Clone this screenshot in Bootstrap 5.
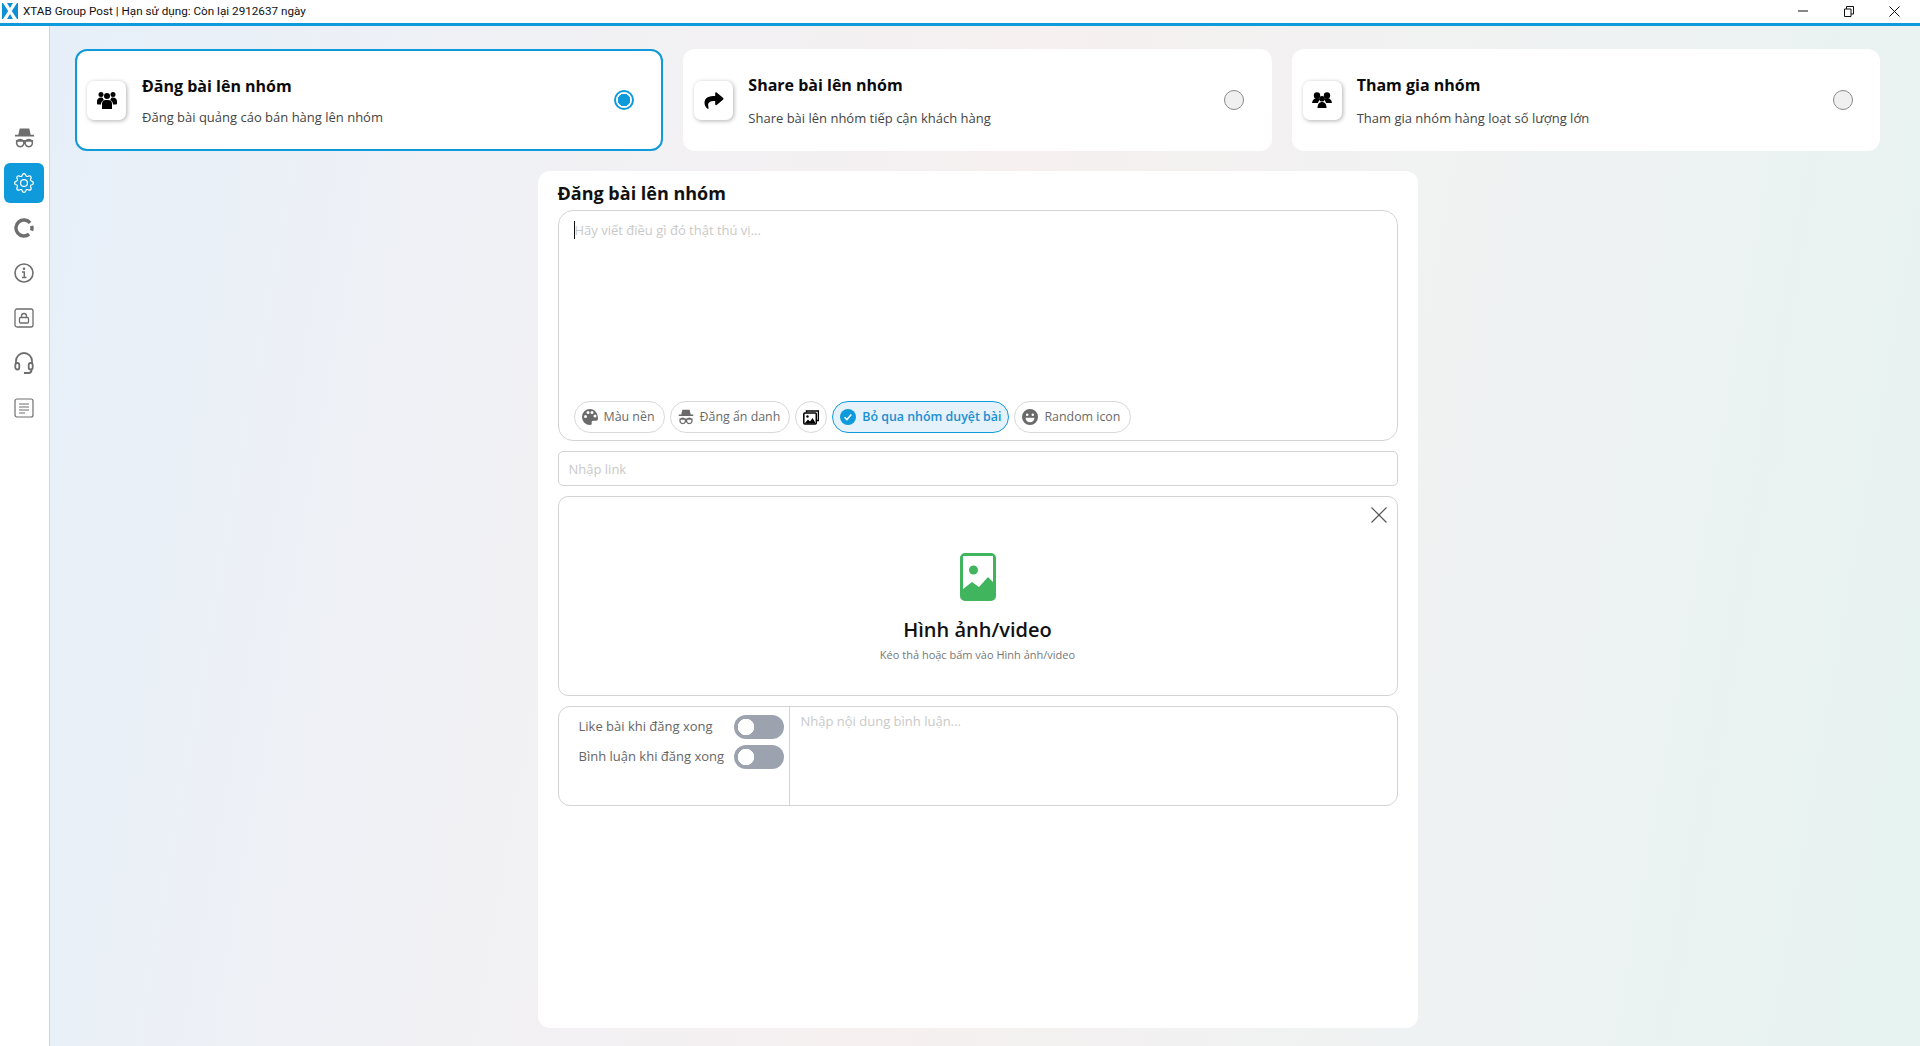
<!DOCTYPE html>
<html lang="vi">
<head>
    <meta charset="UTF-8">
    <title>XTAB Group Post</title>
    <meta name="viewport" content="width=device-width, initial-scale=1">

    <!-- Bootstrap CSS -->
    <link href="https://cdn.jsdelivr.net/npm/bootstrap@5.3.0/dist/css/bootstrap.min.css" rel="stylesheet">

    <style>
        :root {
            --xt-blue: #0f9adb;
            --xt-line: #d4d4d4;
            --xt-hold: #c9c9c9;
        }

        html, body { height: 100%; }

        body {
            font-family: "Open Sans", "Noto Sans", sans-serif;
            font-size: 13px;
            color: #333;
            overflow: hidden;
        }

        .win-bar {
            height: 26px;
            background: #fff;
            border-bottom: 3px solid var(--xt-blue);
            font-family: Roboto, "Noto Sans", sans-serif;
            font-size: 11.7px;
            color: #111;
            padding-left: 2px;
        }
        .win-title { margin-left: 5px; }
        .win-ctl { width: 45.5px; text-align: center; line-height: 0; }
        .win-ctls { margin-right: 3px; }

        .app-body {
            height: calc(100% - 26px);
            background: linear-gradient(100deg, #e5eff9 0%, #f0f1f5 25%, #f6f0f0 50%, #f0f2f2 72%, #e6f3f1 100%);
        }

        .side-rail {
            width: 50px;
            background: #fff;
            border-right: 1px solid #c9d5e4;
            padding: 92px 5px 0 4px;
            gap: 5px;
        }
        .rail-btn {
            width: 40px;
            height: 40px;
            border-radius: 6px;
            color: #6e6e6e;
        }
        .rail-btn.is-on { background: var(--xt-blue); color: #fff; }

        .work-area { padding: 23px 40px 18px 25px; min-width: 0; }

        .mode-grid {
            display: grid;
            grid-template-columns: repeat(3, 1fr);
            gap: 20px;
            height: 102px;
            margin-bottom: 20px;
        }
        .mode-tile {
            background: #fff;
            border-radius: 12px;
            padding: 0 28px 0 11px;
            border: 0;
        }
        .mode-tile.is-on { border: 2px solid var(--xt-blue); padding: 0 27px 0 10px; }
        .mode-tile.is-last { padding-right: 27px; }
        .mode-ico {
            width: 39px;
            height: 39px;
            border-radius: 7px;
            background: #fff;
            box-shadow: 1px 1px 4px rgba(0, 0, 0, .3);
            margin-right: 15px;
            flex: none;
        }
        .mode-tile.is-on .mode-ico { margin-right: 16px; }
        .mode-name { font-size: 16px; font-weight: 700; color: #0b0b0b; line-height: 22px; margin-bottom: 13px; }
        .mode-tile.is-on .mode-name { margin-bottom: 11px; }
        .mode-sub { font-size: 13px; color: #444; line-height: 18px; }

        .mode-radio.form-check-input {
            width: 20px;
            height: 20px;
            margin: 0;
            flex: none;
            background-color: #f0f0f0;
            border: 1px solid #8a8a8a;
        }
        .mode-radio.form-check-input:checked {
            background-color: #fff;
            background-image: radial-gradient(circle, var(--xt-blue) 6px, transparent 6.5px);
            border: 2px solid var(--xt-blue);
        }

        .post-panel {
            width: 880px;
            height: 857px;
            margin: 0 auto;
            background: #fff;
            border-radius: 12px;
            padding: 8px 20px 10px 20px;
        }
        .post-head { font-size: 18px; font-weight: 700; color: #111; line-height: 29px; margin-bottom: 2px; }

        .edit-box {
            height: 231px;
            border: 1px solid var(--xt-line);
            border-radius: 15px;
            padding: 9px 15px 7px 15px;
            margin-bottom: 10px;
            position: relative;
        }
        .edit-caret {
            position: absolute;
            left: 15px;
            top: 10px;
            width: 1px;
            height: 18px;
            background: #111;
        }
        .plain-input {
            border: 0;
            outline: 0;
            resize: none;
            padding: 0;
            font-size: 13px;
            line-height: 20px;
            color: #333;
            background: transparent;
            width: 100%;
        }
        .edit-box .plain-input { padding-left: 1px; }
        .plain-input::placeholder { color: var(--xt-hold); opacity: 1; }

        .tool-pill.btn {
            height: 32px;
            padding: 0 9px 0 7px;
            border: 1px solid #d9d9d9;
            border-radius: 16px;
            font-size: 12.4px;
            color: #6a6a6a;
            background: #fff;
            gap: 6px;
        }
        .tool-gap { gap: 5px; }
        .tool-pill.pill-round { width: 32px; padding: 0; justify-content: center; }
        .tool-pill.pill-on {
            padding-right: 7px;
            background: #e5f1fb;
            border-color: var(--xt-blue);
            color: #1b8fd0;
            font-weight: 600;
        }
        .tool-pill.pill-wide { padding-right: 10px; }

        .link-field.form-control {
            height: 35px;
            border: 1px solid var(--xt-line);
            border-radius: 5px;
            font-size: 13px;
            padding: 0 10px;
            margin-bottom: 10px;
        }
        .link-field.form-control::placeholder { color: var(--xt-hold); opacity: 1; }

        .drop-box {
            height: 200px;
            border: 1px solid var(--xt-line);
            border-radius: 10px;
            margin-bottom: 10px;
            position: relative;
            padding-top: 56px;
        }
        .drop-close { position: absolute; top: 10px; right: 10px; line-height: 0; }
        .drop-name { font-size: 20px; font-weight: 600; color: #111; line-height: 28px; margin-top: 15px; }
        .drop-sub { font-size: 11px; color: #777; line-height: 16px; margin-top: 3px; }

        .comment-box {
            height: 100px;
            border: 1px solid var(--xt-line);
            border-radius: 12px;
        }
        .comment-opts {
            width: 231px;
            border-right: 1px solid var(--xt-line);
            padding: 8px 5px 0 20px;
            flex: none;
        }
        .opt-row { height: 24px; margin-bottom: 6px; color: #666; font-size: 13px; }
        .opt-row .form-check-input {
            width: 50px;
            height: 24px;
            margin: 0;
            float: none;
            border: 0;
            background-color: #9ca3af;
            background-image: radial-gradient(circle at 12px 12px, #fff 8px, transparent 8.5px);
            background-position: 0 0;
            background-size: auto;
        }
        .opt-row.form-switch { padding-left: 0; min-height: 0; }
        .comment-text { padding: 4px 11px; }
    </style>
</head>
<body>

    <div class="win-bar d-flex align-items-center justify-content-between">
        <div class="d-flex align-items-center">
            <svg width="16" height="16" viewBox="0 0 16 16"><rect width="16" height="16" fill="#0f8fd6"/><path d="M1 0h4l3 5 3-5h4L9.800 8 15 16h-4L8 11l-3 5H1l5.200-8z" fill="#fff"/></svg>
            <span class="win-title">XTAB Group Post | Hạn sử dụng: Còn lại 2912637 ngày</span>
        </div>
        <div class="d-flex win-ctls">
            <span class="win-ctl"><svg width="10" height="10" viewBox="0 0 10 10"><path d="M0 5h10" stroke="#111"/></svg></span>
            <span class="win-ctl"><svg width="10" height="11" viewBox="0 0 10 11"><path d="M.5 3h6.500v7.500H.5zM2.500 3V.5h7v7.500H7" fill="none" stroke="#111"/></svg></span>
            <span class="win-ctl"><svg width="11" height="11" viewBox="0 0 11 11"><path d="M.5.5l10 10M10.500.5l-10 10" stroke="#111"/></svg></span>
        </div>
    </div>

    <div class="app-body d-flex">
        <div class="side-rail d-flex flex-column flex-shrink-0">
            <div class="rail-btn d-flex align-items-center justify-content-center">
                <svg width="21" height="22" viewBox="0 0 22 22" fill="currentColor"><path d="M6 1h10l1.500 6.500h3.500v2H1v-2h3.500z"/><path d="M2 14h18M6.500 12.500a3.800 3.800 0 1 0 .01 0zM15.500 12.500a3.800 3.800 0 1 0 .01 0z" fill="none" stroke="currentColor" stroke-width="1.600"/></svg>
            </div>
            <div class="rail-btn is-on d-flex align-items-center justify-content-center">
                <svg width="20" height="20" viewBox="0 0 16 16" fill="currentColor"><path d="M8 4.754a3.246 3.246 0 1 0 0 6.492 3.246 3.246 0 0 0 0-6.492zM5.754 8a2.246 2.246 0 1 1 4.492 0 2.246 2.246 0 0 1-4.492 0z"/><path d="M9.796 1.343c-.527-1.790-3.065-1.790-3.592 0l-.094.319a.873.873 0 0 1-1.255.52l-.292-.16c-1.640-.892-3.433.902-2.540 2.541l.159.292a.873.873 0 0 1-.52 1.255l-.319.094c-1.790.527-1.790 3.065 0 3.592l.319.094a.873.873 0 0 1 .52 1.255l-.16.292c-.892 1.640.901 3.434 2.541 2.540l.292-.159a.873.873 0 0 1 1.255.52l.094.319c.527 1.790 3.065 1.790 3.592 0l.094-.319a.873.873 0 0 1 1.255-.52l.292.16c1.640.893 3.434-.902 2.540-2.541l-.159-.292a.873.873 0 0 1 .52-1.255l.319-.094c1.790-.527 1.790-3.065 0-3.592l-.319-.094a.873.873 0 0 1-.52-1.255l.16-.292c.893-1.640-.902-3.433-2.541-2.540l-.292.159a.873.873 0 0 1-1.255-.52l-.094-.319zm-2.633.283c.246-.835 1.428-.835 1.674 0l.094.319a1.873 1.873 0 0 0 2.693 1.115l.291-.16c.764-.415 1.600.42 1.184 1.185l-.159.292a1.873 1.873 0 0 0 1.116 2.692l.318.094c.835.246.835 1.428 0 1.674l-.319.094a1.873 1.873 0 0 0-1.115 2.693l.16.291c.415.764-.42 1.600-1.185 1.184l-.291-.159a1.873 1.873 0 0 0-2.693 1.116l-.094.318c-.246.835-1.428.835-1.674 0l-.094-.319a1.873 1.873 0 0 0-2.692-1.115l-.292.16c-.764.415-1.600-.42-1.184-1.185l.159-.291A1.873 1.873 0 0 0 1.945 8.930l-.319-.094c-.835-.246-.835-1.428 0-1.674l.319-.094A1.873 1.873 0 0 0 3.060 4.377l-.16-.292c-.415-.764.42-1.600 1.185-1.184l.292.159a1.873 1.873 0 0 0 2.692-1.115l.094-.319z"/></svg>
            </div>
            <div class="rail-btn d-flex align-items-center justify-content-center">
                <svg width="20" height="20" viewBox="0 0 20 20" fill="none" stroke="currentColor" stroke-width="3.400"><path d="M16.100 4.900A8 8 0 1 0 15.100 16.100"/><path d="M17.700 7.900A8 8 0 0 1 17.500 12.700"/></svg>
            </div>
            <div class="rail-btn d-flex align-items-center justify-content-center">
                <svg width="20" height="20" viewBox="0 0 20 20" fill="none" stroke="currentColor" stroke-width="1.600"><circle cx="10" cy="10" r="9"/><circle cx="10" cy="5.800" r="1.300" fill="currentColor" stroke="none"/><path d="M8 9h2.300v5.500M8 14.500h4.500" stroke-width="1.500"/></svg>
            </div>
            <div class="rail-btn d-flex align-items-center justify-content-center">
                <svg width="20" height="20" viewBox="0 0 20 20" fill="none" stroke="currentColor" stroke-width="1.300"><rect x="1" y="1" width="18" height="18" rx="2"/><rect x="5.500" y="9.500" width="9" height="5.500" rx="1"/><path d="M7.500 9.500V8a2.500 2.500 0 0 1 5 0v1.500"/></svg>
            </div>
            <div class="rail-btn d-flex align-items-center justify-content-center">
                <svg width="20" height="22" viewBox="0 0 20 22" fill="none" stroke="currentColor" stroke-width="1.800"><path d="M2 12V9a8 8 0 0 1 16 0v3"/><path d="M17.500 17v1a3 3 0 0 1-3 3H10"/><rect x="1.300" y="11" width="4" height="6.500" rx="2"/><rect x="14.700" y="11" width="4" height="6.500" rx="2"/></svg>
            </div>
            <div class="rail-btn d-flex align-items-center justify-content-center">
                <svg width="20" height="20" viewBox="0 0 20 20" fill="none" stroke="currentColor" stroke-width="1.200"><rect x="1" y="1" width="18" height="18" rx="2"/><path d="M5 6h10M5 9h10M5 12h10M5 15h6"/></svg>
            </div>
        </div>

        <div class="work-area flex-grow-1">
            <div class="mode-grid">
                <div class="mode-tile is-on d-flex align-items-center">
                    <div class="mode-ico d-flex align-items-center justify-content-center">
                        <svg width="20" height="18" viewBox="0 0 20 18" fill="#000"><circle cx="10" cy="5" r="3"/><circle cx="4" cy="3.500" r="2.500"/><circle cx="16" cy="3.500" r="2.500"/><path d="M5 18v-5a4 4 0 0 1 4-4h2a4 4 0 0 1 4 4v5z"/><path d="M0 11a4 4 0 0 1 4-4.500c.7 0 1.300.2 1.800.4A4.500 4.500 0 0 0 7 9a5 5 0 0 0-3 4.500H1a1 1 0 0 1-1-1zM20 11a4 4 0 0 0-4-4.500c-.7 0-1.300.2-1.800.4A4.500 4.500 0 0 1 13 9a5 5 0 0 1 3 4.500h3a1 1 0 0 0 1-1z"/></svg>
                    </div>
                    <div class="flex-grow-1">
                        <div class="mode-name">Đăng bài lên nhóm</div>
                        <div class="mode-sub">Đăng bài quảng cáo bán hàng lên nhóm</div>
                    </div>
                    <input class="mode-radio form-check-input" type="radio" name="mode" checked>
                </div>
                <div class="mode-tile d-flex align-items-center">
                    <div class="mode-ico d-flex align-items-center justify-content-center">
                        <svg width="20" height="19" viewBox="0 0 512 512" fill="#000"><path d="M503.691 189.836L327.687 37.851C312.281 24.546 288 35.347 288 56.015v80.053C127.371 137.907 0 170.100 0 322.326c0 61.441 39.581 122.309 83.333 154.132 13.653 9.931 33.111-2.533 28.077-18.631C66.066 312.814 132.917 274.316 288 272.085V360c0 20.700 24.300 31.453 39.687 18.164l176.004-152c11.071-9.562 11.086-26.753 0-36.328z"/></svg>
                    </div>
                    <div class="flex-grow-1">
                        <div class="mode-name">Share bài lên nhóm</div>
                        <div class="mode-sub">Share bài lên nhóm tiếp cận khách hàng</div>
                    </div>
                    <input class="mode-radio form-check-input" type="radio" name="mode">
                </div>
                <div class="mode-tile is-last d-flex align-items-center">
                    <div class="mode-ico d-flex align-items-center justify-content-center">
                        <svg width="20" height="16" viewBox="0 0 20 16" fill="#000"><circle cx="5" cy="3.500" r="3.200"/><circle cx="15" cy="3.500" r="3.200"/><path d="M0 11C.5 7.500 2.500 6 5 6s3 1.500 3 1.500-1.500 1-2 3.500zM20 11c-.5-3.500-2.500-5-5-5s-3 1.500-3 1.500 1.500 1 2 3.500z"/><circle cx="10" cy="6.800" r="2.800"/><path d="M5.500 16c0-4 2-6 4.500-6s4.500 2 4.500 6z"/></svg>
                    </div>
                    <div class="flex-grow-1">
                        <div class="mode-name">Tham gia nhóm</div>
                        <div class="mode-sub">Tham gia nhóm hàng loạt số lượng lớn</div>
                    </div>
                    <input class="mode-radio form-check-input" type="radio" name="mode">
                </div>
            </div>

            <div class="post-panel">
                <h2 class="post-head">Đăng bài lên nhóm</h2>

                <div class="edit-box d-flex flex-column">
                    <span class="edit-caret"></span>
                    <textarea class="plain-input flex-grow-1" placeholder="Hãy viết điều gì đó thật thú vị..."></textarea>
                    <div class="d-flex tool-gap">
                        <button type="button" class="tool-pill btn d-flex align-items-center">
                            <svg width="16" height="16" viewBox="0 0 16 16" fill="#6a6a6a"><path fill-rule="evenodd" d="M8 0a8 8 0 0 0 0 16c1.500 0 2-1 1.700-2-.3-1 .2-2.200 1.600-2.200H14c1.300 0 2-1 2-2.300C16 4 12.500 0 8 0zM3.500 9a1.500 1.500 0 1 1 0-3 1.500 1.500 0 0 1 0 3zM6 5a1.500 1.500 0 1 1 0-3 1.500 1.500 0 0 1 0 3zm4 0a1.500 1.500 0 1 1 0-3 1.500 1.500 0 0 1 0 3zm3 3.500a1.500 1.500 0 1 1 0-3 1.500 1.500 0 0 1 0 3z"/></svg>
                            Màu nền
                        </button>
                        <button type="button" class="tool-pill btn d-flex align-items-center">
                            <svg width="16" height="16" viewBox="0 0 22 22" fill="#6a6a6a"><path d="M6 1h10l1.500 6.500h3.500v2H1v-2h3.500z"/><path d="M2 14h18M6.500 12.500a3.800 3.800 0 1 0 .01 0zM15.500 12.500a3.800 3.800 0 1 0 .01 0z" fill="none" stroke="#6a6a6a" stroke-width="1.800"/></svg>
                            Đăng ẩn danh
                        </button>
                        <button type="button" class="tool-pill pill-round btn d-flex align-items-center">
                            <svg width="16" height="15" viewBox="0 0 16 15" fill="none" stroke="#000" stroke-width="1.500"><path d="M3.500 2.500V1h12v9.500H14"/><rect x=".8" y="3" width="12.500" height="11" rx="1"/><circle cx="4.500" cy="6.500" r="1.200" fill="#000" stroke="none"/><path d="M1.500 13.500l3.500-4 2 2 2.500-3.500 3.300 5.500z" fill="#000" stroke="none"/></svg>
                        </button>
                        <button type="button" class="tool-pill pill-on btn d-flex align-items-center">
                            <svg width="16" height="16" viewBox="0 0 16 16"><circle cx="8" cy="8" r="8" fill="#0f9adb"/><path d="M4.500 8.300l2.400 2.300 4.400-5" fill="none" stroke="#fff" stroke-width="1.500"/></svg>
                            Bỏ qua nhóm duyệt bài
                        </button>
                        <button type="button" class="tool-pill pill-wide btn d-flex align-items-center">
                            <svg width="16" height="16" viewBox="0 0 16 16" fill="#6a6a6a"><path fill-rule="evenodd" d="M8 0a8 8 0 1 0 0 16A8 8 0 0 0 8 0zM5.200 4.500a1.300 1.300 0 1 1 0 2.600 1.300 1.300 0 0 1 0-2.600zm5.600 0a1.300 1.300 0 1 1 0 2.600 1.300 1.300 0 0 1 0-2.600zM3.500 8.800h9c0 2.500-2 4.500-4.500 4.500s-4.500-2-4.500-4.500z"/></svg>
                            Random icon
                        </button>
                    </div>
                </div>

                <input type="text" class="link-field form-control" placeholder="Nhập link">

                <div class="drop-box text-center">
                    <span class="drop-close">
                        <svg width="16" height="16" viewBox="0 0 16 16"><path d="M.5.500l15 15M15.500.5l-15 15" stroke="#555" stroke-width="1.200"/></svg>
                    </span>
                    <svg width="36" height="48" viewBox="0 0 36 48"><path fill-rule="evenodd" fill="#41b55e" d="M5 0h26a5 5 0 0 1 5 5v38a5 5 0 0 1-5 5H5a5 5 0 0 1-5-5V5a5 5 0 0 1 5-5zM3 3v33l9-7 7 5 9-10 5 5V3z"/><circle cx="13.500" cy="17" r="4.500" fill="#41b55e"/></svg>
                    <div class="drop-name">Hình ảnh/video</div>
                    <div class="drop-sub">Kéo thả hoặc bấm vào Hình ảnh/video</div>
                </div>

                <div class="comment-box d-flex">
                    <div class="comment-opts">
                        <div class="opt-row form-switch d-flex align-items-center justify-content-between">
                            <span>Like bài khi đăng xong</span>
                            <input class="form-check-input" type="checkbox" role="switch">
                        </div>
                        <div class="opt-row form-switch d-flex align-items-center justify-content-between">
                            <span>Bình luận khi đăng xong</span>
                            <input class="form-check-input" type="checkbox" role="switch">
                        </div>
                    </div>
                    <div class="comment-text flex-grow-1">
                        <textarea class="plain-input h-100" placeholder="Nhập nội dung bình luận..."></textarea>
                    </div>
                </div>
            </div>
        </div>
    </div>

    <!-- Bootstrap JS -->
    <script src="https://cdn.jsdelivr.net/npm/bootstrap@5.3.0/dist/js/bootstrap.bundle.min.js"></script>
</body>
</html>
